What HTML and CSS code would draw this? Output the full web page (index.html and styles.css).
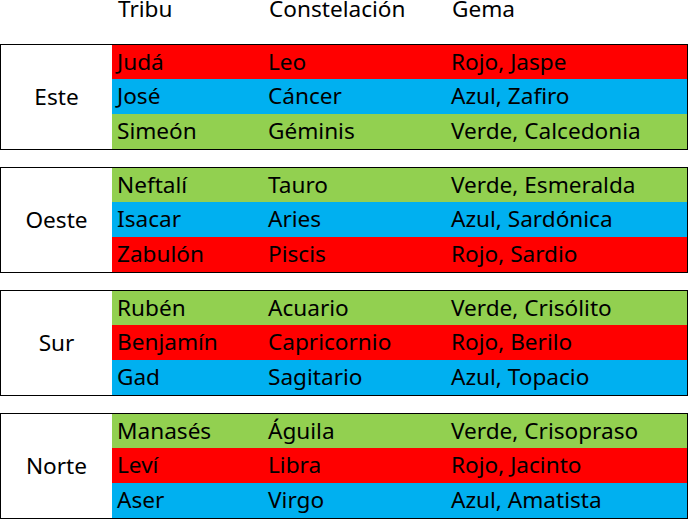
FILE: index.html
```html
<!DOCTYPE html>
<html lang="es">
<head>
<meta charset="utf-8">
<link rel="stylesheet" href="styles.css">
</head>
<body>
<div class="sheet">
  <div class="head">
    <div class="hcell"></div>
    <div class="hcell">Tribu</div>
    <div class="hcell">Constelación</div>
    <div class="hcell">Gema</div>
  </div>

  <div class="group">
    <div class="label">Este</div>
    <div class="rows">
      <div class="row red"><span>Judá</span><span>Leo</span><span>Rojo, Jaspe</span></div>
      <div class="row blue"><span>José</span><span>Cáncer</span><span>Azul, Zafiro</span></div>
      <div class="row green"><span>Simeón</span><span>Géminis</span><span>Verde, Calcedonia</span></div>
    </div>
  </div>

  <div class="group">
    <div class="label">Oeste</div>
    <div class="rows">
      <div class="row green"><span>Neftalí</span><span>Tauro</span><span>Verde, Esmeralda</span></div>
      <div class="row blue"><span>Isacar</span><span>Aries</span><span>Azul, Sardónica</span></div>
      <div class="row red"><span>Zabulón</span><span>Piscis</span><span>Rojo, Sardio</span></div>
    </div>
  </div>

  <div class="group">
    <div class="label">Sur</div>
    <div class="rows">
      <div class="row green"><span>Rubén</span><span>Acuario</span><span>Verde, Crisólito</span></div>
      <div class="row red"><span>Benjamín</span><span>Capricornio</span><span>Rojo, Berilo</span></div>
      <div class="row blue"><span>Gad</span><span>Sagitario</span><span>Azul, Topacio</span></div>
    </div>
  </div>

  <div class="group">
    <div class="label">Norte</div>
    <div class="rows">
      <div class="row green"><span>Manasés</span><span>Águila</span><span>Verde, Crisopraso</span></div>
      <div class="row red"><span>Leví</span><span>Libra</span><span>Rojo, Jacinto</span></div>
      <div class="row blue"><span>Aser</span><span>Virgo</span><span>Azul, Amatista</span></div>
    </div>
  </div>
</div>
</body>
</html>
```
FILE: styles.css
```css
html, body {
  margin: 0;
  padding: 0;
  background: #fff;
}

.sheet {
  width: 688px;
  font-family: "Noto Sans", "Open Sans", sans-serif;
  font-size: 22.6px;
  color: #000;
  display: flex;
  flex-direction: column;
  gap: 17px;
}

.head {
  display: grid;
  grid-template-columns: 112px 151px 183px 1fr;
  height: 44px;
  line-height: 17px;
  margin-bottom: -17px;
}

.hcell {
  padding-left: 6px;
  white-space: nowrap;
}

.group {
  border: 1px solid #000;
  display: grid;
  grid-template-columns: 111px 1fr;
}

.label {
  display: flex;
  align-items: center;
  justify-content: center;
  line-height: 34px;
}

.rows {
  display: grid;
  grid-template-rows: 34px 35px 35px;
}

.row {
  display: grid;
  grid-template-columns: 151px 183px 1fr;
  line-height: 34px;
  white-space: nowrap;
}

.row span {
  padding-left: 5px;
}

.red { background: #ff0000; }
.blue { background: #00b0f0; }
.green { background: #92d050; }
```
